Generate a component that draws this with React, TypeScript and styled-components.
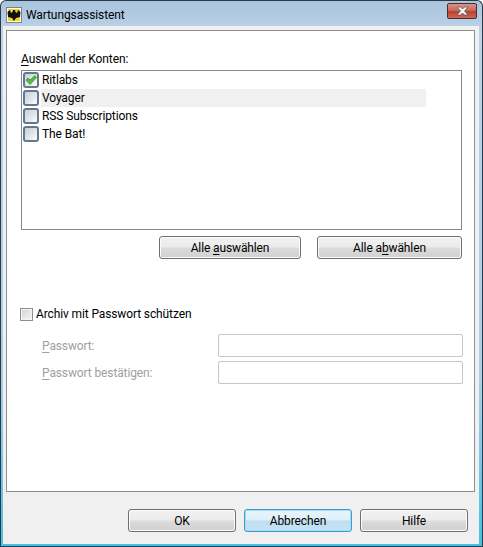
import { FC, ReactElement } from 'react';
import styled, { createGlobalStyle } from 'styled-components';

const GlobalStyle = createGlobalStyle`
  html, body { margin: 0; padding: 0; background: #fff; }
  body { font-family: "Roboto", "DejaVu Sans", sans-serif; font-size: 12px; letter-spacing: -0.12px; color: #000; }
`;

// Outer window with the Aero glass frame
const Window = styled.div`
  width: 483px;
  height: 547px;
  box-sizing: border-box;
  display: flex;
  flex-direction: column;
  border: 1px solid #2b3a47;
  border-bottom-color: #1e3f50;
  border-radius: 6px 6px 0 0;
  background: linear-gradient(180deg, #a9c4dd 0, #bcd3e8 30px, #a6cfe9 70%, #45bfea 100%);
  padding: 0 3px 2px 2px;
  overflow: hidden;
`;

const TitleBar = styled.div`
  height: 25px;
  flex: none;
  display: flex;
  align-items: center;
  gap: 4px;
  font-size: 12px;
  letter-spacing: -0.1px;
  padding: 2px 2px 0 3px;
  box-sizing: border-box;
`;

const CloseButton = styled.div`
  margin-left: auto;
  margin-top: -7px;
  width: 30px;
  height: 16px;
  box-sizing: border-box;
  display: flex;
  align-items: center;
  justify-content: center;
  border: 1px solid #4d2a2e;
  border-radius: 2px;
  background: linear-gradient(180deg, #d9938a 0, #c96a5c 45%, #b8402f 55%, #cf6a55 100%);
`;

const Client = styled.div`
  flex: 1;
  display: flex;
  flex-direction: column;
  background: #f0f0f0;
  padding: 4px 4px 0 3px;
`;

const Page = styled.div`
  height: 462px;
  flex: none;
  box-sizing: border-box;
  background: #fff;
  border: 1px solid #8e8f8f;
  padding: 20px 12px 0 14px;
  display: flex;
  flex-direction: column;
`;

const Caption = styled.div`
  line-height: 16px;
  margin-bottom: 3px;
`;

const ListBox = styled.div`
  height: 160px;
  box-sizing: border-box;
  border: 1px solid #828790;
  padding: 0 35px 0 1px;
`;

const ListRow = styled.div`
  height: 18px;
  display: flex;
  align-items: center;
  gap: 2px;
`;

const RowLabel = styled.span<{ $hover?: boolean }>`
  flex: 1;
  line-height: 18px;
  padding-left: 1px;
  background: ${p => (p.$hover ? '#f0f0f0' : 'transparent')};
`;

const ListCheck = styled.span`
  flex: none;
  width: 16px;
  height: 16px;
  box-sizing: border-box;
  display: flex;
  align-items: center;
  justify-content: center;
  border: 2px solid #66798c;
  border-radius: 3px;
  background: linear-gradient(135deg, #c6d0da 0, #e9edf1 70%, #fff 100%);
`;

const ListActions = styled.div`
  display: flex;
  justify-content: flex-end;
  gap: 16px;
  margin-top: 6px;
`;

const Button = styled.div<{ $width: number; $focused?: boolean }>`
  width: ${p => p.$width}px;
  height: 23px;
  box-sizing: border-box;
  display: flex;
  align-items: center;
  justify-content: center;
  white-space: pre;
  border: 1px solid ${p => (p.$focused ? '#3c9dd0' : '#707070')};
  border-radius: 3px;
  background: ${p =>
    p.$focused
      ? 'linear-gradient(180deg, #e9f5fc 0, #dceff9 48%, #bedff1 52%, #c4e2f3 100%)'
      : 'linear-gradient(180deg, #f2f2f2 0, #ebebeb 48%, #dcdcdc 52%, #d0d0d0 100%)'};
  box-shadow: inset 0 0 0 1px ${p => (p.$focused ? '#a5dcf3' : '#fbfbfb')};
`;

const Underlined = styled.span`
  text-decoration: underline;
  text-underline-offset: 2px;
`;

const ProtectRow = styled.div`
  display: flex;
  align-items: center;
  gap: 3px;
  margin-top: 46px;
  margin-left: -1px;
  height: 18px;
`;

const PlainCheck = styled.span`
  width: 13px;
  height: 13px;
  box-sizing: border-box;
  border: 1px solid #8e8f8f;
  background: linear-gradient(135deg, #d0d0d0 0, #e8e8e8 60%, #f6f6f6 100%);
  box-shadow: inset 0 0 0 1px #f4f4f4;
`;

const PasswordForm = styled.div`
  display: grid;
  grid-template-columns: 176px 245px;
  row-gap: 4px;
  margin-top: 11px;
  padding-left: 21px;
  align-items: center;
`;

const FieldLabel = styled.span`
  color: #a0a0a0;
`;

const FieldInput = styled.div`
  height: 23px;
  box-sizing: border-box;
  border: 1px solid #c6c6c6;
  border-radius: 2px;
  background: #fff;
`;

const Footer = styled.div`
  flex: 1;
  display: flex;
  justify-content: flex-end;
  gap: 8px;
  padding: 17px 7px 0 0;
`;

const BatLogo: FC = (): ReactElement => (
  <svg width="16" height="16" viewBox="0 0 16 16">
    <rect x="0.5" y="0.5" width="15" height="15" fill="#fff" stroke="#222" strokeDasharray="1 1" />
    <rect x="2" y="2" width="12" height="12" fill="#f2d51d" />
    <path d="M8 14L6 11 2 10 1.500 5 4 3 5 6 6.500 5 7 3 9 3 9.500 5 11 6 12 3 14.500 5 14 10 10 11Z" fill="#111" />
  </svg>
);

const CloseGlyph: FC = (): ReactElement => (
  <svg width="13" height="10" viewBox="0 0 13 10">
    <path d="M1 1H4.500L6.500 3 8.500 1H12L8.500 5 12 9H8.500L6.500 7 4.500 9H1L4.500 5Z" fill="#f4f4f4" stroke="#555" strokeWidth="0.700" />
  </svg>
);

const GreenTick: FC = (): ReactElement => (
  <svg width="12" height="10" viewBox="0 0 12 10">
    <path d="M1 5L3 3 5 5 10 0.500 11.500 2.500 5 9.500Z" fill="#4cc23f" stroke="#1f7a20" strokeWidth="0.600" />
  </svg>
);

const accounts = [
  { name: 'Ritlabs', checked: true },
  { name: 'Voyager', hover: true },
  { name: 'RSS Subscriptions' },
  { name: 'The Bat!' },
];

const App: FC = (): ReactElement => {
  return (
    <Window>
      <GlobalStyle />

      <TitleBar>
        <BatLogo />
        Wartungsassistent
        <CloseButton><CloseGlyph /></CloseButton>
      </TitleBar>

      <Client>
        <Page>
          <Caption><Underlined>A</Underlined>uswahl der Konten:</Caption>

          <ListBox>
            {accounts.map(account => (
              <ListRow key={account.name}>
                <ListCheck>{account.checked && <GreenTick />}</ListCheck>
                <RowLabel $hover={account.hover}>{account.name}</RowLabel>
              </ListRow>
            ))}
          </ListBox>

          <ListActions>
            <Button $width={142}><span>Alle <Underlined>a</Underlined>uswählen</span></Button>
            <Button $width={145}><span>Alle a<Underlined>b</Underlined>wählen</span></Button>
          </ListActions>

          <ProtectRow>
            <PlainCheck />
            Archiv mit Passwort schützen
          </ProtectRow>

          <PasswordForm>
            <FieldLabel><Underlined>P</Underlined>asswort:</FieldLabel>
            <FieldInput />
            <FieldLabel><Underlined>P</Underlined>asswort bestätigen:</FieldLabel>
            <FieldInput />
          </PasswordForm>
        </Page>

        <Footer>
          <Button $width={108}>OK</Button>
          <Button $width={108} $focused>Abbrechen</Button>
          <Button $width={108}>Hilfe</Button>
        </Footer>
      </Client>
    </Window>
  )
}

export default App
